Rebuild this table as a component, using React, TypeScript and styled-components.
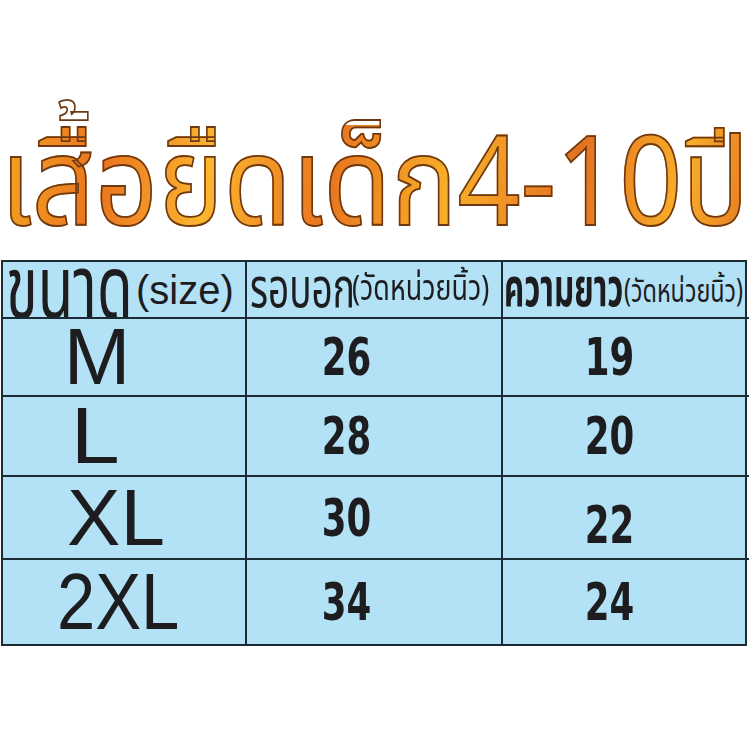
import React from "react";
import styled, { createGlobalStyle } from "styled-components";

const Global = createGlobalStyle`
  html, body {
    margin: 0;
    padding: 0;
    background: #ffffff;
  }
  body {
    width: 750px;
    height: 750px;
    overflow: hidden;
    font-family: "Liberation Sans", Arial, sans-serif;
  }
`;

const Page = styled.div`
  width: 750px;
  height: 750px;
  display: flex;
  flex-direction: column;
  align-items: stretch;
  overflow: hidden;
`;

const Title = styled.h1`
  margin: 0;
  height: 255px;
  display: flex;
  align-items: flex-end;
  justify-content: center;
  padding-bottom: 6px;
  box-sizing: border-box;
  font-weight: 400;
`;

const TitleText = styled.span`
  display: inline-block;
  flex-shrink: 0;
  font-family: "Noto Sans Thai", "Liberation Sans", sans-serif;
  font-size: 124px;
  line-height: 1;
  white-space: nowrap;
  transform: scaleX(0.89);
  transform-origin: center;
  color: transparent;
  background: linear-gradient(100deg, #f6a623 0%, #e9741e 14%, #fbb530 28%, #e8761f 44%, #f8b02a 60%, #e47020 76%, #f8ae2a 90%, #e57a22 100%);
  -webkit-background-clip: text;
  background-clip: text;
  -webkit-text-stroke: 1.8px #6e3912;
`;

const Table = styled.div`
  margin-top: 5px;
  margin-left: 1px;
  width: 746px;
  display: grid;
  grid-template-columns: 244px 256px 246px;
  grid-template-rows: 57px 78px 80px 83px 84px;
  background: #b3e1f5;
  border: 2px solid #1b2a33;
  box-sizing: border-box;
`;

const Cell = styled.div<{ $last?: boolean; $bottom?: boolean }>`
  display: flex;
  align-items: center;
  justify-content: center;
  overflow: hidden;
  border-right: ${(p) => (p.$last ? "none" : "2px solid #1b2a33")};
  border-bottom: ${(p) => (p.$bottom ? "none" : "2px solid #1b2a33")};
  color: #1d1d1f;
`;

const HeadCell = styled(Cell)<{ $pad?: number }>`
  justify-content: flex-start;
  padding-left: ${(p) => (p.$pad === undefined ? 3 : p.$pad)}px;
  white-space: nowrap;
`;

/* a slot of fixed width holding text squeezed horizontally from its left edge */
const Squeeze = styled.span<{ $w: number; $gap?: number }>`
  display: inline-block;
  flex-shrink: 0;
  width: ${(p) => p.$w}px;
  margin-right: ${(p) => p.$gap || 0}px;
  overflow: visible;
`;

const HeadText = styled.span<{ $size: number; $sx: number; $bold?: boolean; $latin?: boolean; $dy?: number }>`
  display: inline-block;
  font-family: ${(p) =>
    p.$latin ? `"Liberation Sans", "Noto Sans Thai", sans-serif` : `"Noto Sans Thai", sans-serif`};
  font-size: ${(p) => p.$size}px;
  font-weight: ${(p) => (p.$bold ? 700 : 400)};
  line-height: 1;
  transform: translateY(${(p) => p.$dy || 0}px) scaleX(${(p) => p.$sx});
  transform-origin: left center;
`;

const SizeCell = styled(Cell)<{ $nudge: number }>`
  padding-right: ${(p) => 22 - p.$nudge * 2}px;
`;

const SizeLabel = styled.span<{ $sx: number }>`
  display: inline-block;
  font-family: "Liberation Sans", Arial, sans-serif;
  font-size: 80px;
  line-height: 1;
  transform: scaleX(${(p) => p.$sx});
`;

const NumCell = styled(Cell)<{ $shift: number; $drop?: number }>`
  padding-right: ${(p) => p.$shift}px;
  padding-top: ${(p) => p.$drop || 0}px;
`;

const Num = styled.span`
  display: inline-block;
  font-family: "DejaVu Sans Condensed", "DejaVu Sans", sans-serif;
  font-weight: 700;
  font-size: 52px;
  line-height: 1;
  transform: scaleX(0.76);
`;

const rows = [
  { size: "M", chest: "26", length: "19", nudge: -16, sx: 1 },
  { size: "L", chest: "28", length: "20", nudge: -18, sx: 1.1 },
  { size: "XL", chest: "30", length: "22", nudge: 3, sx: 1 },
  { size: "2XL", chest: "34", length: "24", nudge: 5, sx: 0.86 },
];

export default function App() {
  return (
    <Page>
      <Global />
      <Title>
        <TitleText>เสื้อยืดเด็ก4-10ปี</TitleText>
      </Title>
      <Table>
        <HeadCell>
          <Squeeze $w={122} $gap={8}>
            <HeadText $size={88} $sx={0.66} $dy={2}>ขนาด</HeadText>
          </Squeeze>
          <Squeeze $w={100}>
            <HeadText $size={40} $sx={1} $latin>(size)</HeadText>
          </Squeeze>
        </HeadCell>
        <HeadCell>
          <Squeeze $w={100} $gap={2}>
            <HeadText $size={56} $sx={0.66}>รอบอก</HeadText>
          </Squeeze>
          <Squeeze $w={146}>
            <HeadText $size={35} $sx={0.77}>(วัดหน่วยนิ้ว)</HeadText>
          </Squeeze>
        </HeadCell>
        <HeadCell $last $pad={1}>
          <Squeeze $w={118} $gap={2}>
            <HeadText $size={54} $sx={0.58} $bold>ความยาว</HeadText>
          </Squeeze>
          <Squeeze $w={124}>
            <HeadText $size={32} $sx={0.73} $dy={2}>(วัดหน่วยนิ้ว)</HeadText>
          </Squeeze>
        </HeadCell>
        {rows.map((r, i) => {
          const bottom = i === rows.length - 1;
          return (
            <React.Fragment key={r.size}>
              <SizeCell $bottom={bottom} $nudge={r.nudge}>
                <SizeLabel $sx={r.sx}>{r.size}</SizeLabel>
              </SizeCell>
              <NumCell $bottom={bottom} $shift={54}>
                <Num>{r.chest}</Num>
              </NumCell>
              <NumCell $bottom={bottom} $last $shift={32} $drop={i === 2 ? 14 : 0}>
                <Num>{r.length}</Num>
              </NumCell>
            </React.Fragment>
          );
        })}
      </Table>
    </Page>
  );
}
